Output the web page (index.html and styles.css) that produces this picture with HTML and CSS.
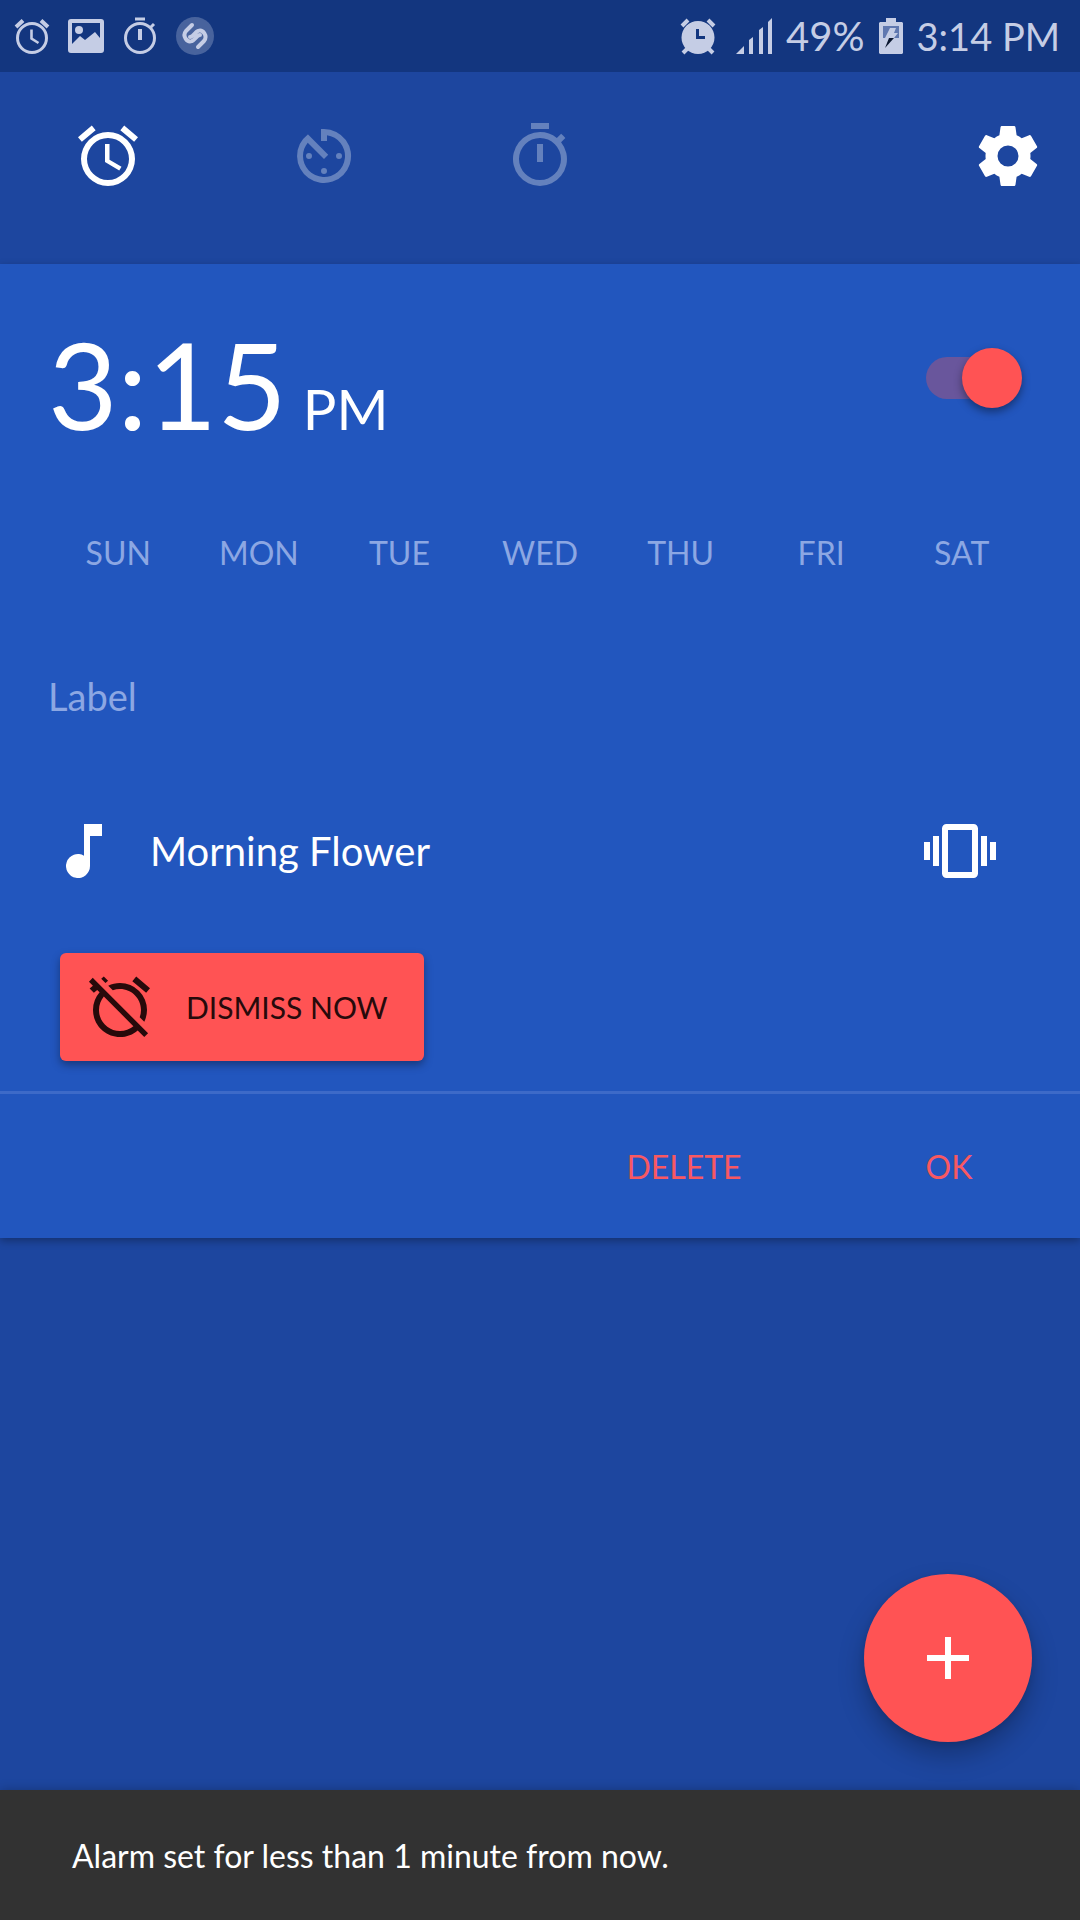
FILE: index.html
```html
<!DOCTYPE html>
<html lang="en">
<head>
<meta charset="utf-8">
<meta name="viewport" content="width=device-width, initial-scale=1">
<title>Clock</title>
<link rel="stylesheet" href="styles.css">
</head>
<body>
<div class="status">
  <div class="status-group status-notices">
    <svg class="s-icon" viewBox="0 0 36 36" aria-hidden="true"><g fill="none" stroke="currentColor"><circle cx="18" cy="20" r="14.5" stroke-width="3"/><path d="M17.500 11.500v9l7 4.500" stroke-width="2.600"/><path d="M2 9l7-6.500M27 2.500L34 9" stroke-width="4"/></g></svg>
    <svg class="s-icon" viewBox="0 0 36 36" aria-hidden="true"><path fill="currentColor" fill-rule="evenodd" d="M3 1h30a3 3 0 0 1 3 3v28a3 3 0 0 1-3 3H3a3 3 0 0 1-3-3V4a3 3 0 0 1 3-3zm1 4v21l8-8 5 4 10-8 5 6V5z"/><circle cx="11" cy="12" r="4" fill="currentColor"/></svg>
    <svg class="s-icon" viewBox="0 0 36 36" aria-hidden="true"><g fill="none" stroke="currentColor"><circle cx="18" cy="20" r="14.500" stroke-width="3"/><path d="M18 11v11" stroke-width="4"/><path d="M13 1h10" stroke-width="3"/><path d="M28 10l4-4" stroke-width="3"/></g></svg>
    <svg class="s-icon s-icon-round" viewBox="0 0 38 38" aria-hidden="true"><circle cx="19" cy="19" r="19" fill="currentColor" opacity=".3"/><path fill="none" stroke="currentColor" stroke-width="4" stroke-linecap="round" stroke-linejoin="round" d="M16 8l-6 6c-4 5 1 12 6 10 3-1 5-6 8-6M22 30l6-6c4-5-1-12-6-10-3 1-5 6-8 6"/></svg>
  </div>
  <div class="status-group status-system">
    <svg class="s-icon" viewBox="0 0 36 36" aria-hidden="true"><path fill="currentColor" fill-rule="evenodd" d="M18 3a16.500 16.500 0 1 1 0 33 16.500 16.500 0 0 1 0-33zm-2 8v10h9v-3h-6v-7z"/><path d="M2 8l6-6M28 2l6 6M7 31l-4 4M29 31l4 4" stroke="currentColor" stroke-width="4"/></svg>
    <svg class="s-icon s-signal" viewBox="0 0 36 36" aria-hidden="true"><path fill="currentColor" d="M0 36l8-8v8zM13 36V22l4-3v17zM23 36V12l4-3v27zM32 36V4l4-4v36z"/></svg>
    <span>49%</span>
    <svg class="s-battery" viewBox="0 0 24 36" aria-hidden="true"><path fill="currentColor" d="M7 0h10v4h6l1 1v30l-1 1H1l-1-1V5l1-1h6z"/><path fill="#6078b0" d="M4 8h16v12H4z"/><path fill="currentColor" d="M11 10h6l-2 5h4l-4 5H6z"/><path fill="#0b1730" d="M10 20h5L6 30z"/></svg>
    <time class="s-time">3:14 PM</time>
  </div>
</div>

<header class="toolbar">
  <nav class="tabs" aria-label="Clock sections">
    <button class="tab is-active" aria-label="Alarms"><svg class="icon" viewBox="0 0 24 24"><path d="M22 5.720l-4.600-3.860-1.290 1.530 4.600 3.860L22 5.720zM7.880 3.390L6.600 1.860 2 5.710l1.290 1.530 4.590-3.850zM12.500 8H11v6l4.750 2.850.75-1.230-4-2.370V8zM12 4a9 9 0 1 0 0 18 9 9 0 0 0 0-18zm0 16a7 7 0 1 1 0-14 7 7 0 0 1 0 14z"/></svg></button>
    <button class="tab" aria-label="Timer"><svg class="icon" viewBox="0 0 24 24"><path d="M11 17a1 1 0 1 0 2 0 1 1 0 0 0-2 0zm0-14v4h2V5.080A7 7 0 1 1 5 12c0-1.680.59-3.220 1.580-4.420L12 13l1.410-1.410-6.800-6.800v.020A9 9 0 1 0 12 3h-1zm7 9a1 1 0 1 0-2 0 1 1 0 0 0 2 0zM6 12a1 1 0 1 0 2 0 1 1 0 0 0-2 0z"/></svg></button>
    <button class="tab" aria-label="Stopwatch"><svg class="icon" viewBox="0 0 24 24"><path d="M15 1H9v2h6V1zm-4 13h2V8h-2v6zm8.030-6.610l1.420-1.420c-.43-.51-.9-.99-1.410-1.410l-1.420 1.420A8.960 8.960 0 0 0 12 4a9 9 0 1 0 7.030 3.390zM12 20a7 7 0 1 1 0-14 7 7 0 0 1 0 14z"/></svg></button>
  </nav>
  <button class="settings" aria-label="Settings"><svg class="icon" viewBox="0 0 24 24"><path d="M19.430 12.980c.04-.32.07-.64.07-.98s-.03-.66-.07-.98l2.110-1.650c.19-.15.24-.42.12-.64l-2-3.460c-.12-.22-.39-.3-.61-.22l-2.490 1c-.52-.4-1.080-.73-1.690-.98l-.38-2.650A.488.488 0 0 0 14 2h-4c-.25 0-.46.18-.49.42l-.38 2.650c-.61.25-1.170.59-1.690.98l-2.490-1c-.23-.09-.49 0-.61.22l-2 3.460c-.13.22-.07.49.12.64l2.110 1.650c-.04.32-.07.65-.07.98s.03.66.07.98l-2.110 1.650c-.19.15-.24.42-.12.64l2 3.460c.12.22.39.3.61.22l2.490-1c.52.4 1.080.73 1.690.98l.38 2.650c.03.24.24.42.49.42h4c.25 0 .46-.18.49-.42l.38-2.650c.61-.25 1.170-.59 1.690-.98l2.490 1c.23.09.49 0 .61-.22l2-3.460c.12-.22.07-.49-.12-.64l-2.110-1.650zM12 15.500a3.500 3.500 0 1 1 0-7 3.500 3.500 0 0 1 0 7z"/></svg></button>
</header>

<main class="content">
  <section class="card" aria-label="Alarm">
    <div class="time-row">
      <button class="alarm-time"><span class="digits">3:15</span><span class="meridiem">PM</span></button>
      <input class="switch" type="checkbox" role="switch" aria-label="Alarm on" checked>
    </div>
    <div class="days" role="group" aria-label="Repeat">
      <button class="day">SUN</button>
      <button class="day">MON</button>
      <button class="day">TUE</button>
      <button class="day">WED</button>
      <button class="day">THU</button>
      <button class="day">FRI</button>
      <button class="day">SAT</button>
    </div>
    <input class="label-field" type="text" placeholder="Label" aria-label="Label">
    <div class="sound-row">
      <button class="ringtone"><svg class="icon" viewBox="0 0 24 24" aria-hidden="true"><path d="M12 3v10.550A4 4 0 1 0 14 17V7h4V3h-6z"/></svg><span>Morning Flower</span></button>
      <button class="vibrate" aria-label="Vibrate"><svg class="icon" viewBox="0 0 24 24"><path d="M0 15h2V9H0v6zm3 2h2V7H3v10zm19-8v6h2V9h-2zm-3 8h2V7h-2v10zM16.500 3h-9C6.670 3 6 3.670 6 4.500v15c0 .83.67 1.500 1.500 1.500h9c.83 0 1.500-.67 1.500-1.500v-15c0-.83-.67-1.500-1.500-1.500zM16 19H8V5h8v14z"/></svg></button>
    </div>
    <button class="dismiss"><svg class="icon" viewBox="0 0 24 24" aria-hidden="true"><path d="M12 6c3.870 0 7 3.130 7 7 0 .84-.16 1.650-.43 2.400l1.520 1.520c.58-1.190.91-2.510.91-3.920a9 9 0 0 0-9-9c-1.410 0-2.730.33-3.920.91L9.600 6.430C10.350 6.160 11.160 6 12 6zm10-.28l-4.600-3.860-1.290 1.530 4.600 3.860L22 5.720zM2.920 2.290L1.650 3.570 2.980 4.900l-1.110.93 1.420 1.420 1.110-.94.8.8A8.964 8.964 0 0 0 3 13c0 4.970 4.020 9 9 9 2.250 0 4.310-.83 5.890-2.200l2.200 2.200 1.270-1.270L3.890 3.270l-.97-.98zm13.550 16.100A6.995 6.995 0 0 1 12 20c-3.870 0-7-3.130-7-7 0-1.700.61-3.260 1.610-4.470l9.860 9.860zM8.020 3.280L6.600 1.860l-.86.71 1.420 1.420.86-.71z"/></svg><span>DISMISS NOW</span></button>
    <div class="actions">
      <button class="action">DELETE</button>
      <button class="action action-ok">OK</button>
    </div>
  </section>
</main>

<button class="fab" aria-label="Add alarm"><svg class="icon" viewBox="0 0 24 24"><path d="M19 13h-6v6h-2v-6H5v-2h6V5h2v6h6v2z"/></svg></button>
<div class="snackbar" role="status">Alarm set for less than 1 minute from now.</div>
</body>
</html>
```
FILE: styles.css
```css
:root {
  --page: #1d469f;
  --card: #2256be;
  --accent: #ff5354;
  --muted: #8ca7e3;
}

* { box-sizing: border-box; }

body {
  margin: 0;
  min-height: 100vh;
  display: flex;
  flex-direction: column;
  background: var(--page);
  color: #fff;
  font-family: "Choco cooky", Lato, sans-serif;
  font-size: 32px;
}

button {
  padding: 0;
  border: 0;
  background: none;
  color: inherit;
  font: inherit;
}

svg { display: block; flex: none; }

.icon {
  width: 72px;
  height: 72px;
  fill: currentColor;
}

/* System status bar */
.status {
  height: 72px;
  padding: 0 20px 0 14px;
  display: flex;
  justify-content: space-between;
  align-items: center;
  background: #13367f;
  color: #c5cde5;
  font-size: 40px;
}

.status-group { display: flex; align-items: center; }
.status-notices { gap: 18px; }
.status-system { gap: 14px; }
.s-icon { width: 36px; height: 36px; overflow: visible; }
.s-icon-round { width: 38px; height: 38px; }
.s-signal { margin-left: 6px; }
.s-battery { width: 24px; height: 36px; }
.s-time { font-size: 38px; }

/* Toolbar */
.toolbar {
  height: 192px;
  display: flex;
  justify-content: space-between;
  align-items: flex-start;
}

.tabs { display: flex; flex: 0 1 648px; }

.tab,
.settings {
  height: 168px;
  display: flex;
  justify-content: center;
  align-items: center;
}

.tab { flex: 1; color: #6481bd; }
.tab.is-active { color: #fff; }
.settings { width: 144px; }

/* Alarm card */
.content { flex: 1; }

.card {
  display: flex;
  flex-direction: column;
  background: var(--card);
  box-shadow: 0 3px 8px rgba(0, 0, 0, .3);
}

.time-row {
  height: 228px;
  padding: 0 58px 0 48px;
  display: flex;
  justify-content: space-between;
  align-items: center;
}

.alarm-time {
  padding-top: 36px;
  display: flex;
  align-items: baseline;
  gap: 16px;
  line-height: 144px;
}

.digits { font-size: 120px; }
.meridiem { font-size: 56px; }

.switch {
  appearance: none;
  position: relative;
  width: 96px;
  height: 60px;
  margin: 0;
}

.switch::before {
  content: "";
  position: absolute;
  inset: 9px 12px 9px 0;
  border-radius: 21px;
  background: #69569c;
}

.switch::after {
  content: "";
  position: absolute;
  top: 0;
  right: 0;
  width: 60px;
  height: 60px;
  border-radius: 50%;
  background: var(--accent);
  box-shadow: 0 4px 8px rgba(0, 0, 0, .4);
}

.days {
  height: 120px;
  padding: 0 48px;
  display: grid;
  grid-template-columns: repeat(7, 1fr);
}

.day { color: var(--muted); }

.label-field {
  height: 168px;
  padding: 0 48px;
  border: 0;
  outline: 0;
  background: none;
  color: #fff;
  font: inherit;
  font-size: 38px;
}

.label-field::placeholder { color: var(--muted); opacity: 1; }

.sound-row {
  height: 142px;
  padding: 0 84px 0 48px;
  display: flex;
  justify-content: space-between;
  align-items: center;
}

.ringtone {
  display: flex;
  align-items: center;
  gap: 30px;
  font-size: 40px;
}

.dismiss {
  height: 108px;
  min-width: 364px;
  margin: 31px 60px 30px;
  padding: 0 36px 0 24px;
  align-self: flex-start;
  display: flex;
  align-items: center;
  gap: 30px;
  border-radius: 6px;
  background: var(--accent);
  color: #270a0b;
  box-shadow: 0 4px 8px rgba(0, 0, 0, .35);
  font-size: 30px;
}

.actions {
  height: 147px;
  padding: 0 24px;
  display: flex;
  justify-content: flex-end;
  border-top: 3px solid #3d6ac8;
}

.action { width: 316px; color: #f85862; }
.action-ok { width: 214px; }

.fab {
  position: fixed;
  right: 48px;
  bottom: 178px;
  width: 168px;
  height: 168px;
  display: grid;
  place-items: center;
  border-radius: 50%;
  background: var(--accent);
  box-shadow: 0 14px 26px rgba(0, 0, 0, .25), 0 2px 8px rgba(0, 0, 0, .12);
}

.snackbar {
  height: 130px;
  padding: 0 72px;
  display: flex;
  align-items: center;
  background: #323232;
  box-shadow: 0 0 10px rgba(0, 0, 0, .25);
}
```
